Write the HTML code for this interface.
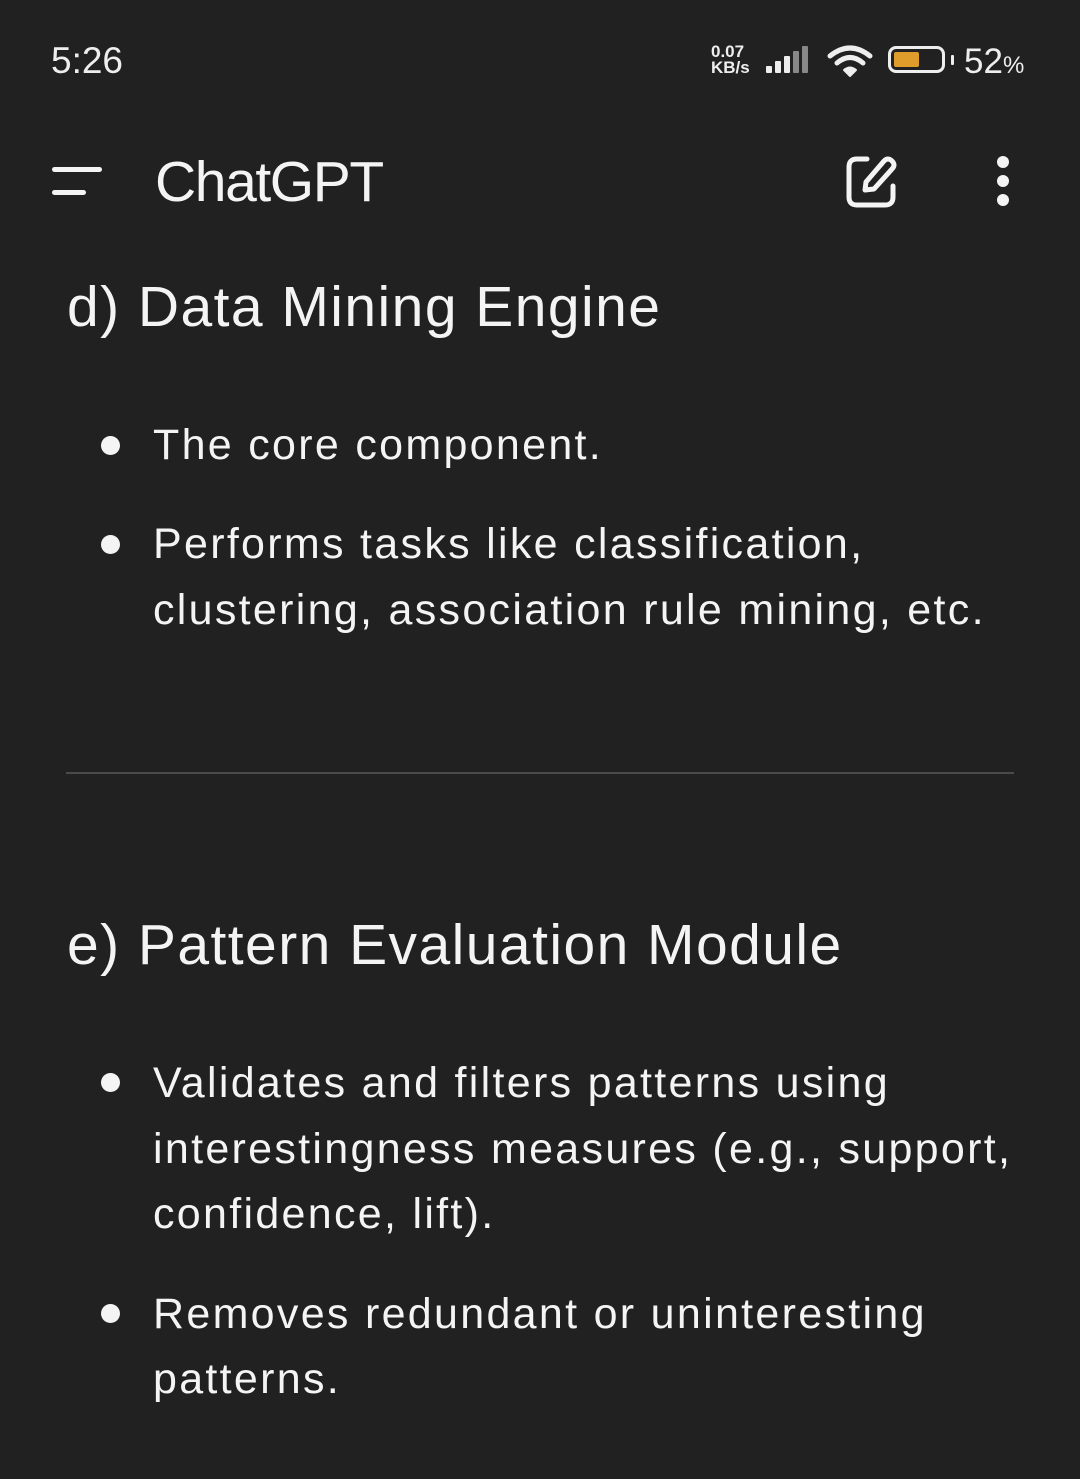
<!DOCTYPE html>
<html><head><meta charset="utf-8"><style>
html,body{margin:0;padding:0;background:#212121;}
body{width:1080px;height:1479px;position:relative;overflow:hidden;font-family:"Liberation Sans",sans-serif;color:#f4f4f4;}
.t{position:absolute;white-space:nowrap;line-height:1;}
.h{font-size:57px;letter-spacing:1.45px;}
.b{font-size:43px;letter-spacing:2.3px;left:153px;}
.dot{position:absolute;left:101px;width:19px;height:19px;border-radius:50%;background:#f4f4f4;}
</style></head><body>
<div class="t" style="left:51px;top:42px;font-size:37px;color:#eee;">5:26</div>
<div class="t" style="left:711px;top:44px;font-size:17px;font-weight:bold;line-height:16px;color:#eee;">0.07<br>KB/s</div>
<svg style="position:absolute;left:764px;top:44px" width="52" height="32">
<rect x="2" y="22" width="6" height="7" rx="1" fill="#eee"/>
<rect x="11" y="17" width="6" height="12" rx="1" fill="#eee"/>
<rect x="20" y="12" width="6" height="17" rx="1" fill="#eee"/>
<rect x="29" y="7" width="6" height="22" rx="1" fill="#888"/>
<rect x="38" y="2" width="6" height="27" rx="1" fill="#888"/>
</svg>
<svg style="position:absolute;left:825px;top:42px" width="50" height="38" viewBox="0 0 50 38">
<path d="M5 14 Q25 -2 45 14" stroke="#eee" stroke-width="5" fill="none" stroke-linecap="round"/>
<path d="M12 21 Q25 10 38 21" stroke="#eee" stroke-width="5" fill="none" stroke-linecap="round"/>
<path d="M19 28 Q25 23 31 28 L25 34 Z" fill="#eee" stroke="#eee" stroke-width="2" stroke-linejoin="round"/>
</svg>
<div style="position:absolute;left:888px;top:46px;width:57px;height:27px;border:3px solid #eee;border-radius:8px;box-sizing:border-box;"></div>
<div style="position:absolute;left:894px;top:52px;width:25px;height:15px;background:#e09c2a;border-radius:2px;"></div>
<div style="position:absolute;left:951px;top:55px;width:3px;height:10px;background:#eee;border-radius:1px;"></div>
<div class="t" style="left:964px;top:44px;font-size:35px;color:#eee;">52<span style="font-size:24px">%</span></div>

<div style="position:absolute;left:52px;top:167px;width:50px;height:5px;border-radius:3px;background:#f4f4f4"></div>
<div style="position:absolute;left:52px;top:190px;width:34px;height:5px;border-radius:3px;background:#f4f4f4"></div>
<div class="t" style="left:155px;top:154px;font-size:57px;letter-spacing:-1.4px;">ChatGPT</div>
<svg style="position:absolute;left:845px;top:155px" width="54" height="54" viewBox="0 0 54 54">
<path d="M22 4 H12 Q4 4 4 12 V42 Q4 50 12 50 H40 Q48 50 48 42 V31" stroke="#f4f4f4" stroke-width="5" fill="none" stroke-linecap="round"/>
<path d="M20 35 L21 27 L39 6 Q43 2 47 6 Q51 10 47 14 L29 34 Z" stroke="#f4f4f4" stroke-width="5" fill="none" stroke-linejoin="round"/>
</svg>
<div style="position:absolute;left:997px;top:156px;width:12px;height:12px;border-radius:50%;background:#f4f4f4"></div>
<div style="position:absolute;left:997px;top:175px;width:12px;height:12px;border-radius:50%;background:#f4f4f4"></div>
<div style="position:absolute;left:997px;top:194px;width:12px;height:12px;border-radius:50%;background:#f4f4f4"></div>

<div class="t h" style="left:67px;top:279px;">d) Data Mining Engine</div>
<div class="dot" style="top:436px"></div>
<div class="t b" style="top:424px;">The core component.</div>
<div class="dot" style="top:535px"></div>
<div class="t b" style="top:523px;">Performs tasks like classification,</div>
<div class="t b" style="top:589px;">clustering, association rule mining, etc.</div>

<div style="position:absolute;left:66px;top:772px;width:948px;height:2px;background:#4a4a4a"></div>

<div class="t h" style="left:67px;top:917px;">e) Pattern Evaluation Module</div>
<div class="dot" style="top:1073px"></div>
<div class="t b" style="top:1062px;">Validates and filters patterns using</div>
<div class="t b" style="top:1128px;">interestingness measures (e.g., support,</div>
<div class="t b" style="top:1193px;">confidence, lift).</div>
<div class="dot" style="top:1304px"></div>
<div class="t b" style="top:1293px;">Removes redundant or uninteresting</div>
<div class="t b" style="top:1358px;">patterns.</div>
</body></html>
